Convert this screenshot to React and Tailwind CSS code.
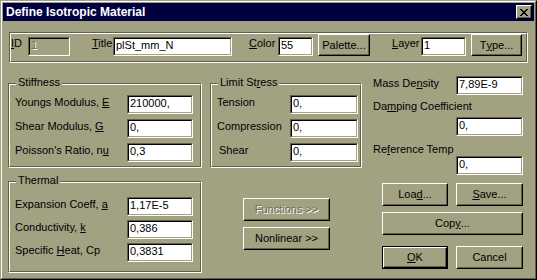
import React from 'react'

function U({ children }) {
  return <span className="underline decoration-1 underline-offset-[1px]">{children}</span>
}

function Field({ value, className = '', disabled }) {
  return (
    <div className={`h-[19px] shrink-0 border border-t-[#5f5f4a] border-l-[#5f5f4a] border-b-white border-r-white ${className}`}>
      <div
        className={`h-full overflow-hidden whitespace-nowrap border border-t-black border-l-black border-b-[#a2a283] border-r-[#a2a283] pl-[1px] leading-[13px] ${
          disabled ? 'bg-[#a2a283] text-[#6f6f58] [text-shadow:1px_1px_0_#ffffff]' : 'bg-white text-black'
        }`}
      >
        {value}
      </div>
    </div>
  )
}

function Btn({ children, className = '', isDefault, disabled }) {
  const face = (
    <div className="h-full border border-t-white border-l-white border-b-black border-r-black">
      <div
        className={`flex h-full items-center justify-center border border-t-[#a2a283] border-l-[#a2a283] border-b-[#5f5f4a] border-r-[#5f5f4a] leading-[13px] ${
          disabled ? 'text-[#6f6f58] [text-shadow:1px_1px_0_#ffffff]' : 'text-black'
        }`}
      >
        {children}
      </div>
    </div>
  )
  return (
    <div className={`shrink-0 ${isDefault ? 'border border-black' : ''} ${className}`}>
      {face}
    </div>
  )
}

function Group({ label, className = '', children }) {
  return (
    <div className={`relative border border-t-[#5f5f4a] border-l-[#5f5f4a] border-b-white border-r-white ${className}`}>
      <div className="h-full border border-t-white border-l-white border-b-[#5f5f4a] border-r-[#5f5f4a]">
        {children}
      </div>
      {label && (
        <span className="absolute left-[7px] top-[-8px] bg-[#a2a283] px-[2px] leading-[13px]">{label}</span>
      )}
    </div>
  )
}

function Row({ label, value, labelW, fieldW, className = '' }) {
  return (
    <div className={`flex items-start ${className}`}>
      <span className={`mt-px shrink-0 leading-[13px] ${labelW}`}>{label}</span>
      <Field value={value} className={fieldW} />
    </div>
  )
}

export default function App() {
  return (
    <div className="h-[280px] w-[537px] overflow-hidden border border-t-[#a2a283] border-l-[#a2a283] border-b-black border-r-black bg-[#a2a283] font-['Liberation_Sans',Arial,sans-serif] text-[11px] text-black">
      <div className="h-full border border-t-white border-l-white border-b-[#5f5f4a] border-r-[#5f5f4a] p-px">
        {/* Title bar */}
        <div className="flex h-[18px] items-center justify-between bg-[#000040] pl-[3px] pr-[2px]">
          <span className="text-[12px] font-bold leading-[14px] text-white">Define Isotropic Material</span>
          <div className="h-[14px] w-[16px] border border-t-white border-l-white border-b-black border-r-black">
            <div className="flex h-full items-center justify-center border border-t-[#a2a283] border-l-[#a2a283] border-b-[#5f5f4a] border-r-[#5f5f4a] bg-[#a2a283]">
              <svg width="8" height="7" viewBox="0 0 8 7" shapeRendering="crispEdges">
                <path
                  d="M0 0h2v1H0zM6 0h2v1H6zM1 1h2v1H1zM5 1h2v1H5zM2 2h4v1H2zM3 3h2v1H3zM2 4h4v1H2zM1 5h2v1H1zM5 5h2v1H5zM0 6h2v1H0zM6 6h2v1H6z"
                  fill="#000"
                />
              </svg>
            </div>
          </div>
        </div>

        {/* Header group */}
        <Group className="ml-[6px] mt-[11px] h-[31px] w-[519px]">
          <div className="flex items-start">
            <span className="mt-[3px] w-[17px] shrink-0 leading-[13px]"><U>I</U>D</span>
            <Field disabled value="1" className="mt-[3px] w-[42px]" />
            <span className="ml-[22px] mt-[3px] w-[21px] shrink-0 leading-[13px]"><U>T</U>itle</span>
            <Field value="plSt_mm_N" className="mt-[3px] w-[119px]" />
            <span className="ml-[17px] mt-[3px] w-[29px] shrink-0 leading-[13px]"><U>C</U>olor</span>
            <Field value="55" className="mt-[3px] w-[35px]" />
            <Btn className="ml-[5px] h-[22px] w-[52px]">Palette...</Btn>
            <span className="ml-[22px] mt-[3px] w-[29px] shrink-0 leading-[13px]"><U>L</U>ayer</span>
            <Field value="1" className="mt-[3px] w-[45px]" />
            <Btn className="ml-[5px] h-[22px] w-[51px]">T<U>y</U>pe...</Btn>
          </div>
        </Group>

        <div className="ml-[5px] mt-[13px] flex items-start">
          {/* Left column */}
          <div className="w-[194px] shrink-0">
            <Group label="Stiffness" className="mt-[7px] h-[85px]">
              <div className="pl-[5px] pt-[10px]">
                <Row label={<>Youngs Modulus, <U>E</U></>} value="210000," labelW="w-[112px]" fieldW="w-[66px]" />
                <Row label={<>Shear Modulus, <U>G</U></>} value="0," labelW="w-[112px]" fieldW="w-[66px]" className="mt-[5px]" />
                <Row label={<>Poisson's Ratio, n<U>u</U></>} value="0,3" labelW="w-[112px]" fieldW="w-[66px]" className="mt-[5px]" />
              </div>
            </Group>
            <Group label="Thermal" className="mt-[13px] h-[92px]">
              <div className="pl-[5px] pt-[14px]">
                <Row label={<>Expansion Coeff, <U>a</U></>} value="1,17E-5" labelW="w-[112px]" fieldW="w-[66px]" />
                <Row label={<>Conductivity, <U>k</U></>} value="0,386" labelW="w-[112px]" fieldW="w-[66px]" className="mt-[4px]" />
                <Row label={<>Specific <U>H</U>eat, Cp</>} value="0,3831" labelW="w-[112px]" fieldW="w-[66px]" className="mt-[4px]" />
              </div>
            </Group>
          </div>

          {/* Middle column */}
          <div className="ml-[8px] w-[152px] shrink-0">
            <Group label={<>Limit St<U>r</U>ess</>} className="mt-[7px] h-[85px]">
              <div className="pl-[5px] pt-[10px]">
                <Row label="Tension" value="0," labelW="w-[73px]" fieldW="w-[68px]" />
                <Row label="Compression" value="0," labelW="w-[73px]" fieldW="w-[68px]" className="mt-[5px]" />
                <Row label={<span className="pl-[2px]">Shear</span>} value="0," labelW="w-[73px]" fieldW="w-[68px]" className="mt-[5px]" />
              </div>
            </Group>
            <Btn disabled className="ml-[33px] mt-[30px] h-[23px] w-[87px]">Functions &gt;&gt;</Btn>
            <Btn className="ml-[33px] mt-[6px] h-[23px] w-[87px]">Nonlinear &gt;&gt;</Btn>
          </div>

          {/* Right column */}
          <div className="ml-[10px] flex w-[151px] shrink-0 flex-col">
            <div className="flex items-start justify-between">
              <span className="mt-px pl-px leading-[13px]">Mass De<U>n</U>sity</span>
              <Field value="7,89E-9" className="w-[67px]" />
            </div>
            <span className="mt-[5px] pl-px leading-[13px]">Da<U>m</U>ping Coefficient</span>
            <Field value="0," className="mt-[4px] w-[67px] self-end" />
            <span className="mt-[7px] pl-px leading-[13px]">Re<U>f</U>erence Temp</span>
            <Field value="0," className="w-[67px] self-end" />
            <div className="ml-[10px] mt-[8px] flex gap-[8px]">
              <Btn className="h-[23px] w-[66px]">Loa<U>d</U>...</Btn>
              <Btn className="h-[23px] w-[67px]"><U>S</U>ave...</Btn>
            </div>
            <Btn className="ml-[10px] mt-[6px] h-[23px] w-[141px]">Cop<U>y</U>...</Btn>
            <div className="ml-[10px] mt-[11px] flex gap-[8px]">
              <Btn isDefault className="h-[23px] w-[66px]"><U>O</U>K</Btn>
              <Btn className="h-[23px] w-[67px]">Cancel</Btn>
            </div>
          </div>
        </div>
      </div>
    </div>
  )
}
